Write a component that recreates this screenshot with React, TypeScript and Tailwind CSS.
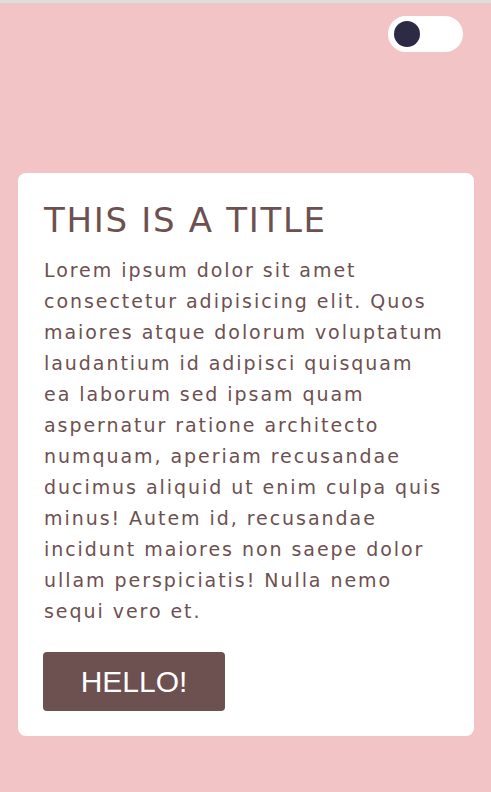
export default function App() {
  return (
    <div className="min-h-[792px] bg-[#f2c4c5] border-t-[3px] border-[#dedede] font-['DejaVu_Sans',sans-serif]">
      <div className="flex justify-end pt-[13px] pr-[28px]">
        <button className="w-[75px] h-[36px] rounded-full bg-white flex items-center pl-[6px]">
          <span className="w-[26px] h-[26px] rounded-full bg-[#2d2a45]" />
        </button>
      </div>

      <div className="mx-[18px] mt-[121px] mr-[17px] bg-white rounded-[8px] px-[26px] pt-[26px] pb-[25px]">
        <h1 className="text-[34px] leading-[42px] text-[#6d5050] tracking-[1.7px]">THIS IS A TITLE</h1>
        <p className="mt-[14px] text-[19px] leading-[31px] text-[#6d5050] tracking-[1.95px]">
          Lorem ipsum dolor sit amet consectetur adipisicing elit. Quos maiores atque dolorum voluptatum laudantium id adipisci quisquam ea laborum sed ipsam quam aspernatur ratione architecto numquam, aperiam recusandae ducimus aliquid ut enim culpa quis minus! Autem id, recusandae incidunt maiores non saepe dolor ullam perspiciatis! Nulla nemo sequi vero et.
        </p>
        <button className="mt-[25px] -ml-px w-[182px] h-[59px] rounded-[4px] bg-[#6d5050] text-white text-[30px] font-['Liberation_Sans',sans-serif]">
          HELLO!
        </button>
      </div>
    </div>
  );
}
